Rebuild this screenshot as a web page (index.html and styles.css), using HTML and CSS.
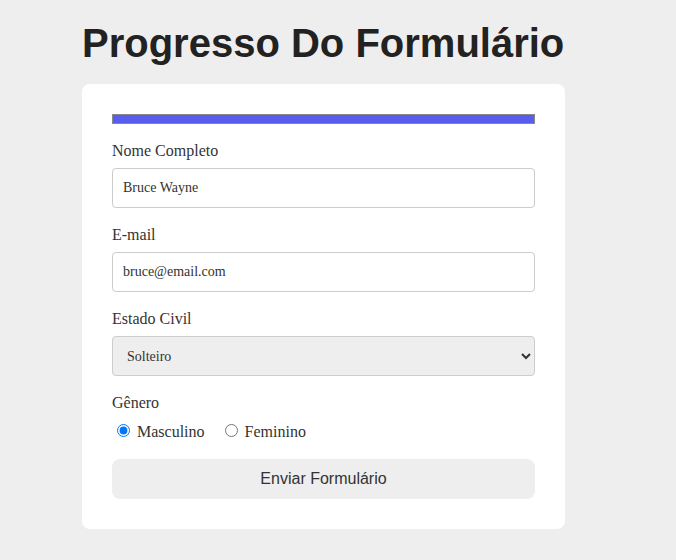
FILE: index.html
```html
<!DOCTYPE html>
<html lang="pt">
<head>
<meta charset="utf-8">
<title>Progresso Do Formulário</title>
<link rel="stylesheet" href="styles.css">
</head>
<body>
<div class="page">
  <div class="wrap">
    <h1 class="title">Progresso Do Formulário</h1>
    <form class="card">
      <div class="progress"><div class="progress-fill" style="width:100%"></div></div>
      <div class="group">
        <label class="label" for="nome">Nome Completo</label>
        <input class="field" id="nome" type="text" value="Bruce Wayne">
      </div>
      <div class="group">
        <label class="label" for="email">E-mail</label>
        <input class="field" id="email" type="email" value="bruce@email.com">
      </div>
      <div class="group">
        <label class="label" for="estado">Estado Civil</label>
        <select class="field select" id="estado">
          <option>Solteiro</option>
          <option>Casado</option>
        </select>
      </div>
      <div class="group">
        <span class="label">Gênero</span>
        <div class="radios">
          <label class="radio"><input type="radio" name="genero" checked> Masculino</label>
          <label class="radio"><input type="radio" name="genero"> Feminino</label>
        </div>
      </div>
      <button class="submit" type="button">Enviar Formulário</button>
    </form>
  </div>
</div>
</body>
</html>
```
FILE: styles.css
```css
html, body {
  margin: 0;
  padding: 0;
  background: #eeeeee;
}
body {
  font-family: "Liberation Serif", serif;
  color: #333;
}
.page {
  padding-left: 82px;
  padding-top: 19px;
}
.wrap {
  width: 483px;
}
.title {
  font-family: "Liberation Sans", Arial, sans-serif;
  font-weight: bold;
  font-size: 40px;
  line-height: 48px;
  color: #222;
  margin: 0 0 17px 0;
  white-space: nowrap;
}
.card {
  background: #fff;
  border-radius: 8px;
  padding: 30px;
  display: flex;
  flex-direction: column;
}
.progress {
  height: 8px;
  border: 1px solid #888;
  background: #fff;
  margin-bottom: 18px;
}
.progress-fill {
  height: 100%;
  background: #585df0;
}
.group {
  display: flex;
  flex-direction: column;
  margin-bottom: 18px;
}
.label {
  font-size: 16px;
  line-height: 18px;
  margin-bottom: 8px;
  color: #333;
}
.field {
  box-sizing: border-box;
  height: 40px;
  width: 100%;
  border: 1px solid #cccccc;
  border-radius: 4px;
  padding: 0 10px;
  font-family: "Liberation Serif", serif;
  font-size: 14px;
  color: #333;
  background: #fff;
}
.select {
  background: #eeeeee;
}
.radios {
  display: flex;
  align-items: center;
  height: 21px;
  font-size: 16px;
}
.radio {
  margin-right: 15px;
  color: #333;
}
.submit {
  height: 40px;
  border: none;
  border-radius: 8px;
  background: #eeeeee;
  font-family: "Liberation Sans", Arial, sans-serif;
  font-size: 16px;
  color: #333;
}
```
